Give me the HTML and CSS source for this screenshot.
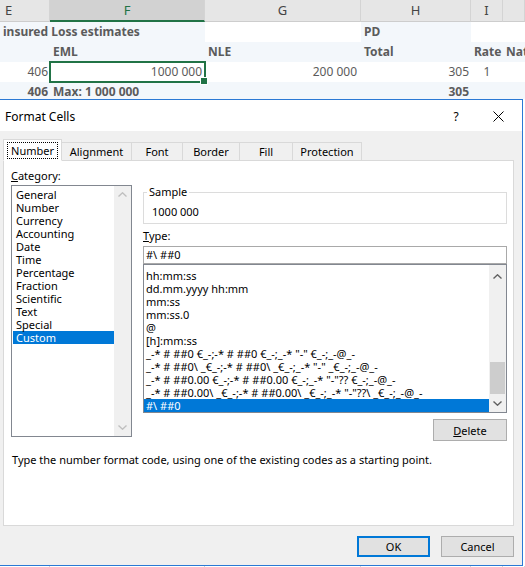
FILE: index.html
```html
<!DOCTYPE html>
<html>
<head>
<meta charset="utf-8">
<link rel="stylesheet" href="styles.css">
</head>
<body>
<div class="sheet">
  <div class="cols colhead">
    <div class="ch ch-e">E</div>
    <div class="ch sel">F</div>
    <div class="ch">G</div>
    <div class="ch">H</div>
    <div class="ch">I</div>
    <div class="ch"></div>
  </div>
  <div class="cols row row1">
    <div class="c b">insured Loss estimates</div>
    <div class="c"></div>
    <div class="c"></div>
    <div class="c b">PD</div>
    <div class="c"></div>
    <div class="c"></div>
  </div>
  <div class="cols row tint">
    <div class="c"></div>
    <div class="c b">EML</div>
    <div class="c b">NLE</div>
    <div class="c b">Total</div>
    <div class="c b">Rate</div>
    <div class="c b clip">Nature</div>
  </div>
  <div class="cols row">
    <div class="c r">406</div>
    <div class="c r selcell">1000 000</div>
    <div class="c r g">200 000</div>
    <div class="c r">305</div>
    <div class="c ctr">1</div>
    <div class="c"></div>
  </div>
  <div class="cols row tint row4">
    <div class="c r b">406</div>
    <div class="c b">Max: 1 000 000</div>
    <div class="c"></div>
    <div class="c r b">305</div>
    <div class="c"></div>
    <div class="c"></div>
  </div>
</div>

<div class="dialog">
  <div class="titlebar">
    <span class="title">Format Cells</span>
    <span class="help">?</span>
    <span class="close"><svg width="11" height="11" viewBox="0 0 11 11"><path d="M0.5 0.5 L10.5 10.5 M10.5 0.5 L0.5 10.5" stroke="#000" stroke-width="1" fill="none"/></svg></span>
  </div>
  <div class="tabs">
    <div class="tab active t-num"><span class="focus">Number</span></div>
    <div class="tab t-align">Alignment</div>
    <div class="tab t-font">Font</div>
    <div class="tab t-border">Border</div>
    <div class="tab t-fill">Fill</div>
    <div class="tab t-prot">Protection</div>
  </div>
  <div class="panel">
    <div class="panel-grid">
      <div class="leftcol">
        <div class="label"><u>C</u>ategory:</div>
        <div class="listbox catlist">
          <div class="items">
            <div class="item">General</div>
            <div class="item">Number</div>
            <div class="item">Currency</div>
            <div class="item">Accounting</div>
            <div class="item">Date</div>
            <div class="item">Time</div>
            <div class="item">Percentage</div>
            <div class="item">Fraction</div>
            <div class="item">Scientific</div>
            <div class="item">Text</div>
            <div class="item">Special</div>
            <div class="item selected">Custom</div>
          </div>
          <div class="vscroll disabled">
            <div class="arrow"><svg width="9" height="5" viewBox="0 0 9 5"><polyline points="0.5,4.5 4.5,0.8 8.5,4.5" fill="none" stroke="currentColor" stroke-width="1.4"/></svg></div>
            <div class="track"></div>
            <div class="arrow"><svg width="9" height="5" viewBox="0 0 9 5"><polyline points="0.5,0.5 4.5,4.2 8.5,0.5" fill="none" stroke="currentColor" stroke-width="1.4"/></svg></div>
          </div>
        </div>
      </div>
      <div class="rightcol">
        <div class="group">
          <div class="legend">Sample</div>
          <div class="sample-val">1000 000</div>
        </div>
        <div class="label type-label"><u>T</u>ype:</div>
        <div class="type-input">#\ ##0</div>
        <div class="listbox typelist">
          <div class="items">
            <div class="item">hh:mm:ss</div>
            <div class="item">dd.mm.yyyy hh:mm</div>
            <div class="item">mm:ss</div>
            <div class="item">mm:ss.0</div>
            <div class="item">@</div>
            <div class="item">[h]:mm:ss</div>
            <div class="item">_-* # ##0 €_-;-* # ##0 €_-;_-* "-" €_-;_-@_-</div>
            <div class="item">_-* # ##0\ _€_-;-* # ##0\ _€_-;_-* "-" _€_-;_-@_-</div>
            <div class="item">_-* # ##0.00 €_-;-* # ##0.00 €_-;_-* "-"?? €_-;_-@_-</div>
            <div class="item">_-* # ##0.00\ _€_-;-* # ##0.00\ _€_-;_-* "-"??\ _€_-;_-@_-</div>
            <div class="item selected">#\ ##0</div>
          </div>
          <div class="vscroll">
            <div class="arrow"><svg width="9" height="5" viewBox="0 0 9 5"><polyline points="0.5,4.5 4.5,0.8 8.5,4.5" fill="none" stroke="currentColor" stroke-width="1.4"/></svg></div>
            <div class="track"><div class="thumb"></div></div>
            <div class="arrow"><svg width="9" height="5" viewBox="0 0 9 5"><polyline points="0.5,0.5 4.5,4.2 8.5,0.5" fill="none" stroke="currentColor" stroke-width="1.4"/></svg></div>
          </div>
        </div>
        <div class="btnrow"><button class="btn del"><u>D</u>elete</button></div>
      </div>
    </div>
    <p class="desc">Type the number format code, using one of the existing codes as a starting point.</p>
  </div>
  <div class="footer">
    <button class="btn default">OK</button>
    <button class="btn">Cancel</button>
  </div>
</div>
<div class="cols tail">
  <div class="tc"></div><div class="tc"></div><div class="tc"></div><div class="tc"></div><div class="tc"></div><div class="tc"></div>
</div>
</body>
</html>
```

FILE: styles.css
```css
* { box-sizing: border-box; }
html, body { margin: 0; padding: 0; }
body {
  width: 525px;
  height: 567px;
  overflow: hidden;
  background: #fff;
  font-family: "Noto Sans", "Open Sans", sans-serif;
}

/* ---------- spreadsheet ---------- */
.sheet {
  font-size: 12px;
  color: #5b5b5b;
}
.cols {
  display: grid;
  grid-template-columns: 50px 155px 156px 110px 32px 1fr;
}
.colhead { height: 22px; background: #e6e6e6; }
.ch {
  height: 22px;
  line-height: 21px;
  text-align: center;
  color: #444;
  font-size: 13px;
  border-bottom: 1px solid #cdcdcd;
  border-right: 1px solid #d4d4d4;
}
.ch-e { text-align: left; padding-left: 5px; }
.ch.sel {
  background: #d2d2d2;
  color: #217346;
  border-bottom: 2px solid #217346;
}
.row { height: 20px; }
.row1 {
  background: linear-gradient(to right, #f3f7fb 0 205px, #fff 205px 361px, #f3f7fb 361px 471px, #fff 471px);
}
.tint { background: #f3f7fb; }
.row4 { height: 17px; overflow: hidden; }
.c {
  line-height: 20px;
  padding: 0 3px;
  white-space: nowrap;
}
.clip { overflow: hidden; padding-right: 0; }
.b { font-weight: 700; }
.r { text-align: right; padding-right: 2px; }
.g { padding-right: 4px; }
.ctr { text-align: center; }
.selcell { position: relative; padding-right: 3px; }
.selcell::after {
  content: "";
  position: absolute;
  left: -1px; top: -1px; right: -1px; bottom: -1px;
  border: 2px solid #217346;
}
.selcell::before {
  content: "";
  position: absolute;
  right: -3px; bottom: -3px;
  width: 6px; height: 6px;
  background: #217346;
  border: 1px solid #fff;
  z-index: 2;
}

/* ---------- dialog ---------- */
.dialog {
  width: 523px;
  height: 467px;
  background: #f0f0f0;
  border-top: 1px solid #2b79d4;
  border-right: 1px solid #2b79d4;
  border-bottom: 1px solid #2b79d4;
  font-size: 11px;
  color: #000;
  padding: 0 8px 0 3px;
  display: flex;
  flex-direction: column;
}
.titlebar {
  height: 31px;
  margin: 0 -8px 0 -3px;
  background: #fff;
  display: flex;
  align-items: center;
  padding: 2px 0 0 5px;
  font-size: 12px;
}
.title { flex: 1; }
.help { width: 30px; margin-right: 12px; text-align: center; font-size: 12px; }
.close { width: 30px; display: flex; justify-content: center; margin-right: 9px; }

.tabs {
  display: flex;
  align-items: flex-end;
  height: 30px;
  margin-bottom: -1px;
  position: relative;
  z-index: 1;
}
.tab {
  height: 19px;
  line-height: 17px;
  text-align: center;
  background: #f0f0f0;
  border-top: 1px solid #d9d9d9;
  border-right: 1px solid #d9d9d9;
  border-bottom: 1px solid #d9d9d9;
}
.tab.active {
  height: 22px;
  background: #fff;
  border: 1px solid #d9d9d9;
  border-bottom: 1px solid #fff;
  padding-top: 2px;
}
.focus {
  display: inline-block;
  outline: 1px dotted #000;
  outline-offset: 0;
  padding: 0 3px;
  line-height: 15px;
}
.t-num { width: 59px; }
.t-align { width: 70px; }
.t-font { width: 51px; }
.t-border { width: 57px; }
.t-fill { width: 53px; }
.t-prot { width: 69px; }

.panel {
  height: 366px;
  background: #fff;
  border: 1px solid #d9d9d9;
  padding: 7px 6px 0 7px;
}
.panel-grid {
  display: grid;
  grid-template-columns: 121px 1fr;
  column-gap: 11px;
}
.label { line-height: 15px; height: 15px; }
.leftcol .label { margin-bottom: 2px; }

.listbox {
  display: flex;
  border: 1px solid #828790;
  background: #fff;
  overflow: hidden;
}
.items { flex: 1; overflow: hidden; }
.item {
  line-height: 13px;
  height: 13px;
  white-space: nowrap;
  padding-left: 3px;
}
.item.selected { background: #0078d7; color: #fff; }
.catlist { height: 252px; }
.catlist .items { padding: 2px 0 0 1px; }
.typelist { height: 149px; }
.typelist .items { padding: 4px 0 0 0; }
.typelist .item { padding-left: 2px; }

.vscroll {
  width: 17px;
  background: #f0f0f0;
  display: flex;
  flex-direction: column;
  color: #606060;
}
.vscroll.disabled { color: #bfbfbf; }
.arrow {
  height: 17px;
  display: flex;
  align-items: center;
  justify-content: center;
}
.typelist .arrow:first-child { height: 21px; padding-top: 2px; }
.track { flex: 1; display: flex; flex-direction: column; justify-content: flex-end; padding-bottom: 1px; }
.thumb { height: 32px; background: #cdcdcd; margin: 0 1px; }

.group {
  margin-top: 24px;
  border: 1px solid #dcdcdc;
  height: 32px;
  padding-left: 3px;
}
.legend {
  display: block;
  width: max-content;
  margin-top: -8px;
  line-height: 14px;
  height: 14px;
  padding: 0 2px;
  background: #fff;
}
.sample-val { margin-top: 6px; padding-left: 5px; line-height: 14px; }
.type-label { margin-top: 4px; }
.type-input {
  margin-top: 3px;
  height: 18px;
  border: 1px solid #a9a9a9;
  line-height: 16px;
  padding-left: 2px;
}
.btnrow { display: flex; justify-content: flex-end; margin-top: 6px; }
.btn {
  font-family: inherit;
  font-size: 11px;
  color: #000;
  background: #e1e1e1;
  border: 1px solid #adadad;
  height: 22px;
  width: 74px;
  padding: 0;
  margin: 0;
}
.btn.del { width: 74px; }
.desc { margin: 12px 0 0 1px; line-height: 14px; }

.footer {
  display: flex;
  justify-content: flex-end;
  gap: 11px;
  margin-top: 10px;
}
.footer .btn { width: 73px; height: 21px; }
.btn.default { border: 2px solid #0078d7; }

.tail { height: 1px; }
.tc { border-right: 1px solid #d4d4d4; height: 1px; }
```
